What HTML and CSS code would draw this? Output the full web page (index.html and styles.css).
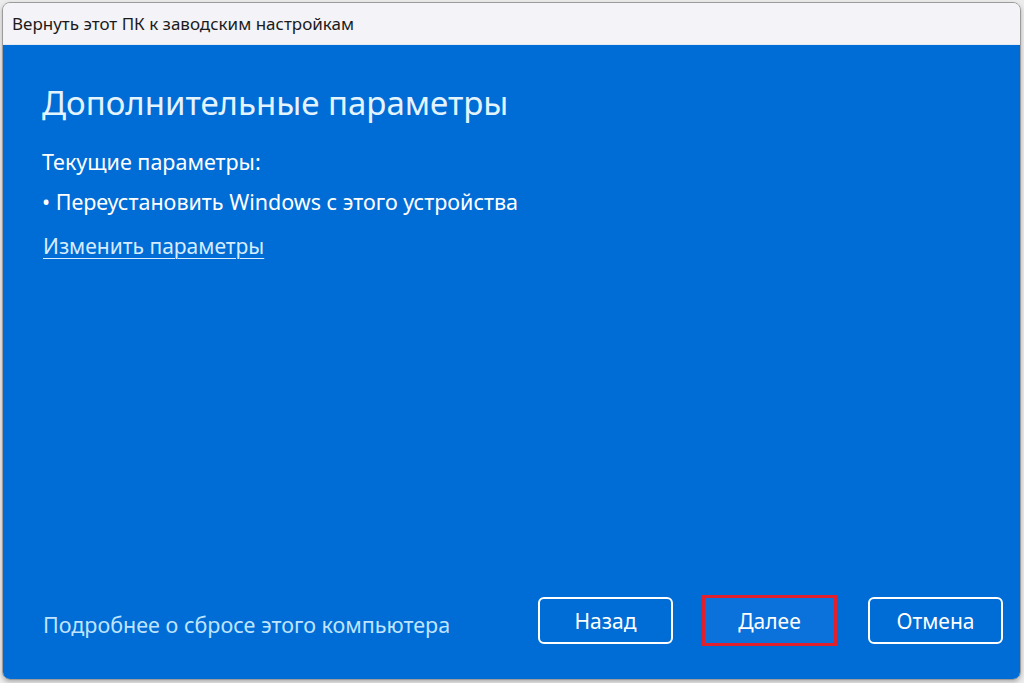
FILE: index.html
```html
<!DOCTYPE html>
<html lang="ru">
<head>
<meta charset="utf-8">
<title>Вернуть этот ПК к заводским настройкам</title>
<link rel="stylesheet" href="styles.css">
</head>
<body>
<div class="window">
  <div class="titlebar">Вернуть этот ПК к заводским настройкам</div>
  <div class="content">
    <div class="main">
      <h1 class="heading">Дополнительные параметры</h1>
      <p class="line">Текущие параметры:</p>
      <p class="line">• Переустановить Windows с этого устройства</p>
      <a class="link" href="#">Изменить параметры</a>
    </div>
    <div class="footer">
      <a class="more" href="#">Подробнее о сбросе этого компьютера</a>
      <div class="buttons">
        <button class="btn">Назад</button>
        <button class="btn focused">Далее</button>
        <button class="btn cancel">Отмена</button>
      </div>
    </div>
  </div>
</div>
</body>
</html>
```
FILE: styles.css
```css
* { box-sizing: border-box; }
html, body { margin: 0; padding: 0; }
body {
  background: #ececec;
  width: 1024px;
  height: 683px;
  overflow: hidden;
  font-family: "Noto Sans", "Open Sans", sans-serif;
}
.window {
  margin: 2px 3px 0 2px;
  width: 1019px;
  height: 678px;
  border: 1px solid #9c9c9c;
  border-radius: 8px;
  overflow: hidden;
  display: flex;
  flex-direction: column;
  box-shadow: 0 2px 4px rgba(0,0,0,0.25);
}
.titlebar {
  height: 42px;
  flex: none;
  background: #f3f3f8;
  color: #1b1b1b;
  font-size: 17px;
  line-height: 42px;
  padding-left: 9px;
  border-bottom: 1px solid #e4eaf2;
}
.content {
  flex: 1;
  background: #006cd6;
  display: flex;
  flex-direction: column;
  justify-content: space-between;
  padding: 36px 17px 33px 39px;
}
.heading {
  margin: 0 0 17px;
  font-weight: 400;
  font-size: 33px;
  line-height: 44px;
  color: #e4f4ff;
}
.line {
  margin: 0;
  font-size: 21.5px;
  line-height: 40px;
  color: #ffffff;
}
.link {
  display: inline-block;
  margin-top: 9px;
  font-size: 21px;
  line-height: 30px;
  color: #d6ecff;
  text-decoration: underline;
  text-decoration-thickness: 1px;
  text-underline-offset: 4px;
  padding-left: 1px;
}
.footer {
  display: flex;
  align-items: center;
  justify-content: space-between;
}
.more {
  color: #bfe4ff;
  text-decoration: none;
  font-size: 21.5px;
  padding-left: 1px;
  padding-top: 7px;
}
.buttons {
  display: flex;
  align-items: center;
  gap: 29px;
}
.btn {
  width: 135px;
  height: 47px;
  border: 2px solid #ffffff;
  border-radius: 6px;
  background: #006cd6;
  color: #ffffff;
  font-family: "Noto Sans", "Open Sans", sans-serif;
  font-size: 21px;
  padding: 0;
}
.btn.focused {
  height: 51px;
  border: 3px solid #e0202c;
  border-radius: 0;
  background: #0a72da;
}
.btn.cancel {
  margin-left: 2px;
}
```
